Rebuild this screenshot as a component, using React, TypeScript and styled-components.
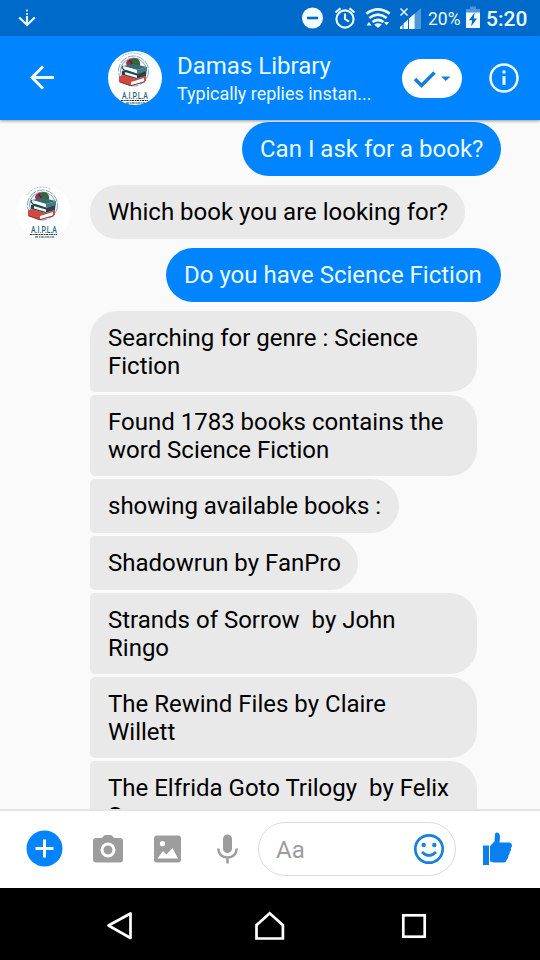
import React from 'react';
import styled, { createGlobalStyle } from 'styled-components';

const GlobalStyle = createGlobalStyle`
  * { box-sizing: border-box; }
  body { margin: 0; background: #fafafa; font-family: Roboto, sans-serif; }
  svg { display: block; flex: none; }
`;

const Screen = styled.div`
  width: 540px;
  height: 960px;
  display: flex;
  flex-direction: column;
  overflow: hidden;
  background: #fafafa;
`;

const StatusBar = styled.div`
  flex: none;
  height: 36px;
  display: flex;
  align-items: center;
  padding: 0 13px 0 18px;
  background: #006acb;
  color: #e9fbff;
`;

const StatusIcons = styled.div`
  margin-left: auto;
  display: flex;
  align-items: center;
`;

const Battery = styled.span`
  width: 35px;
  margin-left: 6px;
  font-size: 17.5px;
  line-height: 36px;
  padding-top: 1px;
  white-space: nowrap;
`;

const Clock = styled.span`
  width: 41px;
  margin-left: 6px;
  font-size: 21px;
  font-weight: 500;
  line-height: 36px;
  padding-top: 1px;
  white-space: nowrap;
`;

const Gap = styled.span<{ $w: number }>`
  width: ${(p) => p.$w}px;
`;

const Header = styled.header`
  flex: none;
  height: 84px;
  display: flex;
  align-items: center;
  padding: 0 20px 0 29px;
  background: #0084ff;
  color: #e9fbff;
  box-shadow: 0 1px 3px rgba(0, 0, 0, 0.4);
  z-index: 1;
`;

const Titles = styled.div`
  width: 200px;
  margin-left: 15px;
  padding-top: 2px;
  display: flex;
  flex-direction: column;
`;

const Name = styled.div`
  font-size: 24px;
  line-height: 30px;
  white-space: nowrap;
`;

const Subtitle = styled.div`
  font-size: 18px;
  line-height: 26px;
  letter-spacing: -0.03px;
  white-space: nowrap;
`;

const StatusPill = styled.div`
  width: 60px;
  height: 39px;
  margin-left: 25px;
  margin-right: 26px;
  border-radius: 20px;
  background: #fff;
`;

const Thread = styled.main`
  flex: 1;
  min-height: 0;
  overflow: hidden;
  padding: 2px 39px 0 17px;
  display: flex;
  flex-direction: column;
  gap: 9px;
`;

const Row = styled.div<{ $sent?: boolean }>`
  flex: none;
  display: flex;
  justify-content: ${(p) => (p.$sent ? 'flex-end' : 'flex-start')};
`;

const AvatarSlot = styled.div`
  flex: none;
  width: 73px;
`;

const Group = styled.div`
  display: flex;
  flex-direction: column;
  align-items: flex-start;
  gap: 3px;
`;

const Bubble = styled.div<{ $sent?: boolean; $stack?: 'first' | 'middle'; $w: number }>`
  width: ${(p) => p.$w}px;
  min-height: 54px;
  padding: 13px 0 12px 18px;
  border-radius: ${(p) =>
    p.$stack === 'first' ? '27px 27px 27px 5px' : p.$stack === 'middle' ? '5px 27px 27px 5px' : '27px'};
  background: ${(p) => (p.$sent ? '#0084ff' : '#e9e9e9')};
  color: ${(p) => (p.$sent ? '#e9fbff' : '#000')};
  font-size: 24px;
  line-height: 28px;
  white-space: pre;
`;

const Composer = styled.footer`
  flex: none;
  height: 79px;
  display: flex;
  align-items: center;
  padding: 0 26px 2px 26px;
  border-top: 2px solid #e4e4e4;
  background: #fff;
`;

const Input = styled.div`
  width: 198px;
  height: 54px;
  margin-left: 19px;
  margin-right: 26px;
  display: flex;
  align-items: center;
  justify-content: space-between;
  padding: 0 10px 0 17px;
  border: 1.5px solid #dcdcdc;
  border-radius: 27px;
  color: #9d9d9d;
  font-size: 24px;
`;

const Placeholder = styled.span`
  padding-top: 2px;
`;

const NavBar = styled.nav`
  flex: none;
  height: 72px;
  background: #000;
  display: flex;
  align-items: center;
  padding: 4px 0 0 106px;
`;

function Logo({ size = 54 }: { size?: number }) {
  return (
    <svg width={size} height={size} viewBox="0 0 54 54">
      <circle cx="27" cy="27" r="27" fill="#fff" />
      <circle cx="25.500" cy="20" r="15" fill="none" stroke="#7fa3bf" strokeWidth="1" strokeDasharray="8 1.2" />
      <circle cx="25.500" cy="20" r="13" fill="#eef4f7" stroke="#6d93b4" strokeWidth="0.8" />
      <path d="M10 10a18 18 0 0 1 24-5.500" fill="none" stroke="#8a9cab" strokeWidth="0.8" strokeDasharray="2 1" />
      <path d="M18 12c1-5 9-6 12-2l2 5-6 2-7-2z" fill="#a12d50" />
      <path d="M24 8c4-3 9 1 8 6l-5 2-3-3z" fill="#39643b" />
      <path d="M21 9l3 3-1 3" fill="none" stroke="#2b3035" strokeWidth="1.200" />
      <path d="M15 15l10-2 14 3-10 3z" fill="#376b73" />
      <path d="M15 15l14 4v4l-13-4z" fill="#f6fafa" />
      <path d="M29 19l10-3v4l-10 3z" fill="#477b83" />
      <path d="M15 15l-1 2 2 2 13 4" fill="none" stroke="#25464e" strokeWidth="1.100" />
      <path d="M14 20l4-1 11 4 9-3v5l-10 3-14-4z" fill="#28434c" />
      <path d="M17 21l12 3.500v2.500l-12-3.500z" fill="#eef7f6" />
      <path d="M11 25.500l4-1.500 13 4 10-3v5l-15 5-12-4z" fill="#d0483f" />
      <path d="M23 31l13-4v3.500l-13 4z" fill="#fff" />
      <path d="M12 31l11 3.700 14-4" fill="none" stroke="#8f3434" strokeWidth="1" />
      <text x="27" y="48" textAnchor="middle" fontFamily="Roboto, sans-serif" fontSize="8.500" fontWeight="500" fill="#26647b" textLength="26" lengthAdjust="spacingAndGlyphs">A.I.P.L.A</text>
      <path d="M13 49.500h27" stroke="#28363b" strokeWidth="1.100" strokeDasharray="2.5 0.7 1.5 0.5" />
      <path d="M18 52h19" stroke="#28363b" strokeWidth="1.100" strokeDasharray="3 0.7 1.5 0.5" />
    </svg>
  );
}

function StatusGlyphs() {
  return (
    <svg width="122" height="36" viewBox="300 0 122 36">
      <circle cx="312.500" cy="18" r="10.500" fill="#f3feff" />
      <rect x="307" y="16.700" width="11" height="2.600" fill="#006acb" />
      <g fill="none" stroke="#e9fbff" strokeWidth="2.100">
        <circle cx="345" cy="19" r="8.600" />
        <path d="M345 13.500V19l4 2.700M335.500 12.500l5-4.300M354.500 12.500l-5-4.300" />
      </g>
      <g fill="none" stroke="#e9fbff" strokeWidth="2.700">
        <path d="M366.300 13.700q11.700-8.500 23.400 0" />
        <path d="M369.300 18q8.700-6.700 17.400 0" />
        <path d="M372.500 22q5.500-4 11 0" />
      </g>
      <path d="M374.200 24.500q3.800-2.500 7.600 0L378 28z" fill="#e9fbff" />
      <path d="M366.500 25.500l2.500-3.500 2.500 3.500zM384 22h5l-2.500 3.500z" fill="#e9fbff" />
      <path d="M415 13.500L421 8v21h-6z" fill="#5096db" />
      <g fill="#f3feff">
        <path d="M400 29v-2l2.500-2.300V29zM403.500 29v-5.500l4.500-4V29zM409 29V18.500l5.700-5V29z" />
      </g>
      <path d="M400.500 8.500l7 7M407.500 8.500l-7 7" stroke="#e9fbff" strokeWidth="1.500" />
    </svg>
  );
}

const messages: { text: string; width: number }[] = [
  { text: 'Searching for genre : Science\nFiction', width: 387 },
  { text: 'Found 1783 books contains the\nword Science Fiction', width: 387 },
  { text: 'showing available books :', width: 309 },
  { text: 'Shadowrun by FanPro', width: 268 },
  { text: 'Strands of Sorrow  by John\nRingo', width: 387 },
  { text: 'The Rewind Files by Claire\nWillett', width: 387 },
  { text: 'The Elfrida Goto Trilogy  by Felix\nSavage', width: 387 },
];

export default function App() {
  return (
    <Screen>
      <GlobalStyle />
      <StatusBar>
        <svg width="18" height="20" viewBox="0 0 18 20">
          <path d="M1.200 9.500L9 17l7.800-7.500M9 8v8.500" fill="none" stroke="#e9fbff" strokeWidth="2.200" />
          <path d="M9 1.500v2M9 5v2" stroke="#b4dcf5" strokeWidth="2" />
        </svg>
        <StatusIcons>
          <StatusGlyphs />
          <Battery>20%</Battery>
          <Gap $w={3} />
          <svg width="14" height="36" viewBox="0 0 14 36">
            <path d="M4 6.500h6V9h4v4H0V9h4z" fill="#5096db" />
            <path d="M0 12.500h14V28H0z" fill="#f3feff" />
            <path d="M8.700 12.500L3 20.300h3.200L5 26.500l6-8H7.700z" fill="#006acb" />
          </svg>
          <Clock>5:20</Clock>
        </StatusIcons>
      </StatusBar>
      <Header>
        <svg width="26" height="28" viewBox="0 0 26 28">
          <path d="M25 13.500H3M14 2.500L3 13.500l11 11" fill="none" stroke="#f3feff" strokeWidth="2.900" />
        </svg>
        <Gap $w={53} />
        <Logo />
        <Titles>
          <Name>Damas Library</Name>
          <Subtitle>Typically replies instan...</Subtitle>
        </Titles>
        <StatusPill>
          <svg width="60" height="39" viewBox="0 0 60 39">
            <path d="M13 20l6.500 6.500L32.500 13.500" fill="none" stroke="#177fd9" strokeWidth="3.500" />
            <path d="M39 17.500h9.500L43.800 22z" fill="#177fd9" />
          </svg>
        </StatusPill>
        <svg width="32" height="32" viewBox="0 0 32 32">
          <circle cx="16" cy="16" r="13.500" fill="none" stroke="#e9fbff" strokeWidth="2.500" />
          <path d="M16 14v9M16 8.500v3" stroke="#e9fbff" strokeWidth="3" />
        </svg>
      </Header>
      <Thread>
        <Row $sent><Bubble $sent $w={259}>Can I ask for a book?</Bubble></Row>
        <Row>
          <AvatarSlot><Logo /></AvatarSlot>
          <Bubble $w={375}>Which book you are looking for?</Bubble>
        </Row>
        <Row $sent><Bubble $sent $w={335}>Do you have Science Fiction</Bubble></Row>
        <Row>
          <AvatarSlot />
          <Group>
            {messages.map((m, i) => (
              <Bubble key={m.text} $w={m.width} $stack={i === 0 ? 'first' : 'middle'}>{m.text}</Bubble>
            ))}
          </Group>
        </Row>
      </Thread>
      <Composer>
        <svg width="37" height="37" viewBox="0 0 37 37">
          <circle cx="18.500" cy="18.500" r="18" fill="#0084ff" />
          <path d="M18.500 9.500v18M9.500 18.500h18" stroke="#fff" strokeWidth="3" />
        </svg>
        <Gap $w={30} />
        <svg width="30" height="30" viewBox="0 0 30 30">
          <path d="M3 4h6l2-2.500q.6-.5 1.500-.5h5q1 0 1.500.500L21 4h6q3 0 3 3v18.500q0 3-3 3H3q-3 0-3-3V7q0-3 3-3z" fill="#9d9d9d" />
          <circle cx="15" cy="16" r="6" fill="#9d9d9d" stroke="#fff" strokeWidth="3" />
        </svg>
        <Gap $w={31} />
        <svg width="28" height="28" viewBox="0 0 28 28">
          <rect x="0" y="0.500" width="27" height="27" rx="3" fill="#9d9d9d" />
          <circle cx="8.500" cy="8.700" r="2.600" fill="#fff" />
          <path d="M3.500 23.500L9 16l3.500 3.500 6-6.500L24 23.500z" fill="#fff" />
        </svg>
        <Gap $w={35} />
        <svg width="22" height="30" viewBox="0 0 22 30">
          <rect x="6" y="0.500" width="9" height="18.500" rx="4.500" fill="#9d9d9d" />
          <path d="M1.200 14.500q.8 9 9.300 9t9.300-9M10.500 23v6.500" fill="none" stroke="#9d9d9d" strokeWidth="2.500" />
        </svg>
        <Input>
          <Placeholder>Aa</Placeholder>
          <svg width="32" height="32" viewBox="0 0 32 32">
            <circle cx="16" cy="16" r="13.700" fill="none" stroke="#1682dc" strokeWidth="2.700" />
            <circle cx="10.700" cy="12" r="2.200" fill="#1682dc" />
            <circle cx="21.300" cy="12" r="2.200" fill="#1682dc" />
            <path d="M9 19q7 7 14 0" fill="none" stroke="#1682dc" strokeWidth="2.500" />
          </svg>
        </Input>
        <svg width="31" height="34" viewBox="0 0 31 34">
          <path d="M1 13.500h6V33H1z" fill="#0a7fef" />
          <path d="M8 14l4.500-4.500.5-7.500q.3-1.500 1.700-1.500 3.300 0 3.300 4.500l-.5 5.500h10q2.500.5 2.500 3 0 1.800-1.200 2.500 1 2-1 4 .3 2-1.300 3.500-.2 2.500-1.500 4-.5 2.500-3.500 3H12l-4-1z" fill="#0a7fef" />
        </svg>
      </Composer>
      <NavBar>
        <svg width="28" height="30" viewBox="0 0 28 30">
          <path d="M24.500 2.500v24.500L2.500 14.500z" fill="none" stroke="#fff" strokeWidth="2.700" strokeLinejoin="round" />
        </svg>
        <Gap $w={120} />
        <svg width="32" height="32" viewBox="0 0 32 32">
          <path d="M2.500 28.500V15.200L15.700 3.200l13.200 12v13.300z" fill="none" stroke="#fff" strokeWidth="2.700" />
        </svg>
        <Gap $w={115} />
        <svg width="26" height="26" viewBox="0 0 26 26">
          <rect x="2.300" y="2.300" width="21.400" height="21.400" fill="none" stroke="#fff" strokeWidth="2.700" />
        </svg>
      </NavBar>
    </Screen>
  );
}
